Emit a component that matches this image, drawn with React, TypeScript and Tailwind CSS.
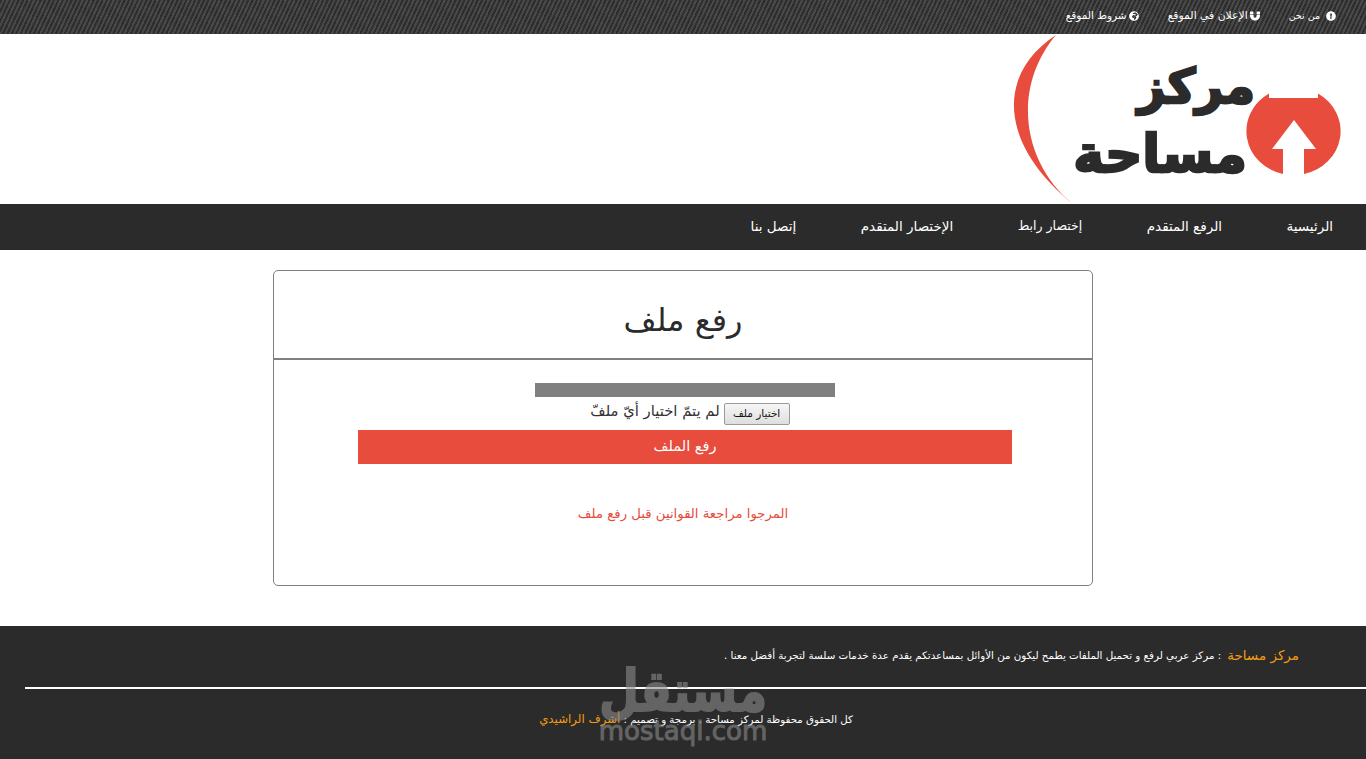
import { FaExclamationCircle, FaMagnet, FaGlobeAfrica } from "react-icons/fa";

const font = { fontFamily: '"DejaVu Sans", sans-serif' };

function Logo() {
  return (
    <svg width="366" height="170" viewBox="1000 34 366 170" className="block">
      <path d="M1056 35 C995 75 1000 145 1073 204 C1024 165 1010 90 1056 35 Z" fill="#e74c3c" />
      <path d="M1269 93.5 L1269 98 L1318 98 L1318 93.5 A47 44 0 0 1 1304 174 L1304 149 L1316 149 L1294 120 L1272 149 L1283 149 L1283 174 A47 44 0 0 1 1269 93.5 Z" fill="#e74c3c" />
      <text x="1255" y="103" textAnchor="start" direction="rtl" fontFamily="DejaVu Sans" fontWeight="700" fontSize="48" fill="#2b2b2b" stroke="#2b2b2b" strokeWidth="2.5">مركز</text>
      <text x="1247" y="172" textAnchor="start" direction="rtl" fontFamily="DejaVu Sans" fontWeight="700" fontSize="52" fill="#2b2b2b" stroke="#2b2b2b" strokeWidth="2.5">مساحة</text>
    </svg>
  );
}

export default function App() {
  return (
    <div dir="rtl" style={font} className="relative min-h-[759px] bg-white text-[#333] overflow-hidden">
      <div className="h-[34px] flex items-center gap-[29px] pr-[30px] pb-[2px] text-white text-[10.5px] bg-[#3a3a3a] bg-[repeating-linear-gradient(115deg,#2e2e2e_0px,#2e2e2e_2px,#484848_2px,#484848_4px)]">
        <span className="flex items-center gap-[6px] text-[9.5px]"><FaExclamationCircle className="text-[10px]" />من نحن</span>
        <span className="flex items-center gap-[2px] text-[10.8px]"><FaMagnet className="text-[10px]" />الإعلان في الموقع</span>
        <span className="flex items-center gap-[2px]"><FaGlobeAfrica className="text-[10px]" />شروط الموقع</span>
      </div>
      <div className="h-[170px] flex justify-start"><Logo /></div>
      <nav className="h-[46px] pb-[2px] bg-[#2b2b2b] flex items-center gap-[64.5px] pr-[33px] text-white text-[13.5px]">
        <a>الرئيسية</a>
        <a>الرفع المتقدم</a>
        <a className="text-[12.5px]">إختصار رابط</a>
        <a>الإختصار المتقدم</a>
        <a>إتصل بنا</a>
      </nav>
      <main className="pt-[20px] pb-[40px] flex justify-center">
        <div className="w-[820px] h-[316px] border border-[#808080] rounded-[5px] bg-white">
          <div className="h-[89px] pt-[11px] border-b-2 border-[#808080] flex items-center justify-center text-[32px] text-[#2b2b2b]">رفع ملف</div>
          <div className="flex flex-col items-center pt-[23px] pl-[4px]">
            <div className="w-[300px] h-[14px] bg-[#808080]" />
            <div className="h-[33px] flex items-center gap-[4px] text-[14.8px] pl-[10px]">
              <button className="w-[66px] h-[22px] border border-[#9a9a9a] rounded-[2px] bg-[linear-gradient(#f6f6f6,#dedede)] text-[10.5px] text-[#111]">اختيار ملف</button>
              <span className="pb-[5px]">لم يتمّ اختيار أيّ ملفّ</span>
            </div>
            <div className="w-[654px] h-[34px] bg-[#e74c3c] text-white text-[14.5px] flex items-center justify-center">رفع الملف</div>
            <p className="mt-[40px] pr-[4px] text-[13.25px] text-[#e74c3c]">المرجوا مراجعة القوانين قبل رفع ملف</p>
          </div>
        </div>
      </main>
      <footer className="h-[133px] bg-[#2b2b2b] text-white">
        <div className="h-[61px] pb-[2px] flex items-center gap-[6px] pr-[67px] text-[10.3px]">
          <span className="text-[13.5px] text-[#f39c12]">مركز مساحة</span>
          <span>: مركز عربي لرفع و تحميل الملفات يطمح ليكون من الأوائل بمساعدتكم يقدم عدة خدمات سلسة لتجربة أفضل معنا .</span>
        </div>
        <div className="h-[2px] bg-white ml-[25px]" />
        <div className="flex justify-start pr-[513px] pt-[22px] text-[10.25px]">
          <span>كل الحقوق محفوظة لمركز مساحة . برمجة و تصميم : <span className="text-[11.8px] text-[#f39c12]">أشرف الراشيدي</span></span>
        </div>
      </footer>
      <div className="absolute left-[598px] top-[665px] w-[170px] flex flex-col items-center text-[#8a8a8a] opacity-60 pointer-events-none">
        <span className="text-[46px] leading-[53px] font-bold scale-y-[1.25] [-webkit-text-stroke:1.5px_#8a8a8a]">مستقل</span>
        <span dir="ltr" className="text-[26px] leading-[26px] [-webkit-text-stroke:1px_#8a8a8a]">mostaql.com</span>
      </div>
    </div>
  );
}
